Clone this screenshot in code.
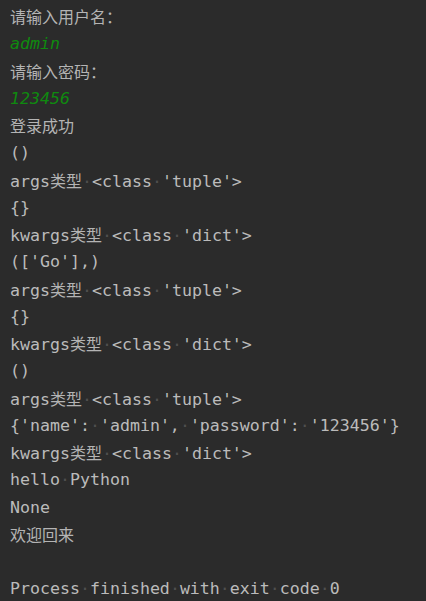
import React from "react";

const lines: { text: string; input?: boolean }[] = [
  { text: "请输入用户名：" },
  { text: "admin", input: true },
  { text: "请输入密码：" },
  { text: "123456", input: true },
  { text: "登录成功" },
  { text: "()" },
  { text: "args类型 <class 'tuple'>" },
  { text: "{}" },
  { text: "kwargs类型 <class 'dict'>" },
  { text: "(['Go'],)" },
  { text: "args类型 <class 'tuple'>" },
  { text: "{}" },
  { text: "kwargs类型 <class 'dict'>" },
  { text: "()" },
  { text: "args类型 <class 'tuple'>" },
  { text: "{'name': 'admin', 'password': '123456'}" },
  { text: "kwargs类型 <class 'dict'>" },
  { text: "hello Python" },
  { text: "None" },
  { text: "欢迎回来" },
  { text: "" },
  { text: "Process finished with exit code 0" },
];

const isCjk = (c: string) => /[\u3000-\u9fff\uff00-\uffef]/.test(c);

// split a line into runs so CJK, spaces and ascii can be styled apart
const Line = ({ text }: { text: string }) => {
  const parts: { kind: "cjk" | "space" | "ascii"; s: string }[] = [];
  for (const c of text) {
    const kind = c === " " ? "space" : isCjk(c) ? "cjk" : "ascii";
    const last = parts[parts.length - 1];
    if (last && last.kind === kind) last.s += c;
    else parts.push({ kind, s: c });
  }
  return (
    <>
      {parts.map((p, i) =>
        p.kind === "cjk" ? (
          <span
            key={i}
            className="text-[16px] text-[#b4b4b4] [font-family:'Noto_Sans_CJK_SC',sans-serif]"
          >
            {p.s}
          </span>
        ) : p.kind === "space" ? (
          <span key={i} className="text-[#4f4f4f]">
            {"·".repeat(p.s.length)}
          </span>
        ) : (
          <span key={i}>{p.s}</span>
        )
      )}
    </>
  );
};

const App = () => {
  return (
    <div className="w-[426px] h-[601px] bg-[#2b2b2b] overflow-hidden">
      <div className="pt-[3px] pl-[10px] text-[16.6px] leading-[27.25px] text-[#bbbbbb] [font-family:'DejaVu_Sans_Mono','Noto_Sans_CJK_SC',monospace] whitespace-pre">
        {lines.map((l, i) => (
          <div
            key={i}
            className={
              l.input ? "h-[27.25px] italic text-[#0f8a0f]" : "h-[27.25px]"
            }
          >
            <Line text={l.text} />
          </div>
        ))}
      </div>
    </div>
  );
};

export default App;
